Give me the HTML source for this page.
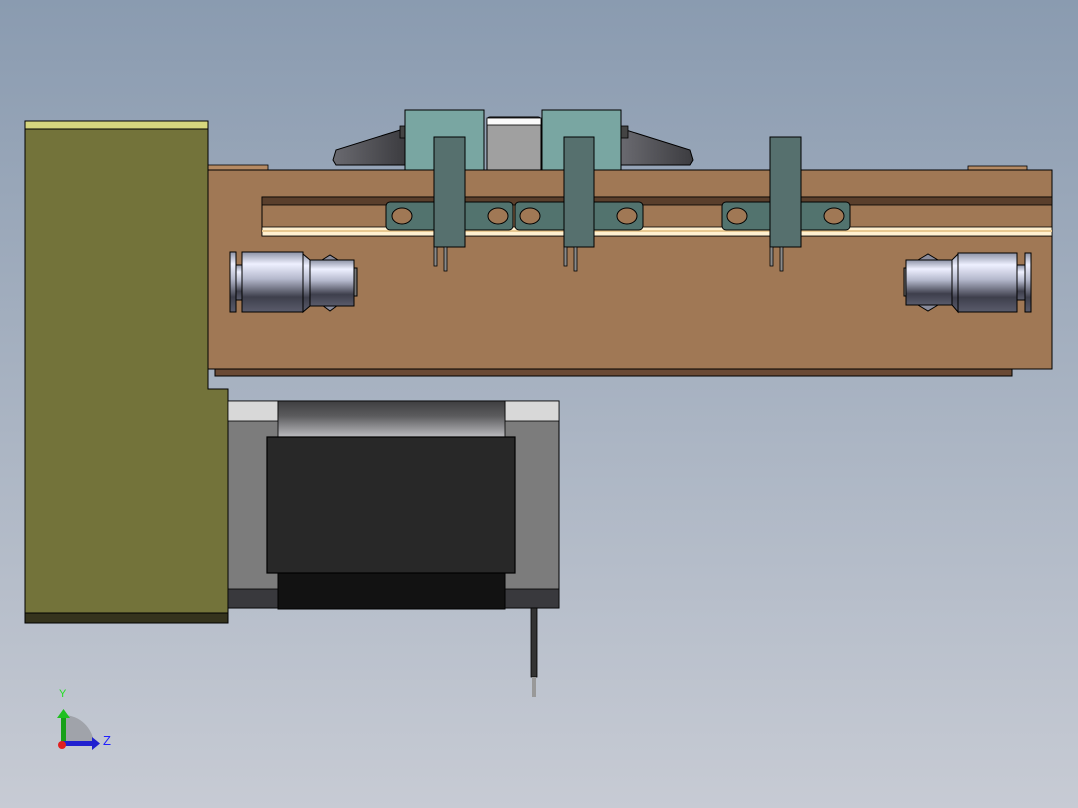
<!DOCTYPE html>
<html><head><meta charset="utf-8"><style>
html,body{margin:0;padding:0;width:1078px;height:808px;overflow:hidden}
svg{display:block}
</style></head><body>
<svg width="1078" height="808" viewBox="0 0 1078 808" xmlns="http://www.w3.org/2000/svg" font-family="Liberation Sans, sans-serif">
<defs>
<linearGradient id="bg" x1="0" y1="0" x2="0" y2="1">
<stop offset="0" stop-color="#8a9bb0"/><stop offset="1" stop-color="#c7cbd4"/></linearGradient>
<linearGradient id="cyl" x1="0" y1="0" x2="0" y2="1">
<stop offset="0" stop-color="#8d93a6"/><stop offset="0.2" stop-color="#eef0ff"/><stop offset="0.45" stop-color="#b4b8cc"/><stop offset="0.75" stop-color="#3e3f4c"/><stop offset="1" stop-color="#5a5c6c"/></linearGradient>
<linearGradient id="mt" x1="0" y1="0" x2="0" y2="1">
<stop offset="0" stop-color="#3e3e40"/><stop offset="0.4" stop-color="#5c5c5e"/><stop offset="1" stop-color="#c4c4c8"/></linearGradient>
<linearGradient id="lev" x1="0" y1="0" x2="1" y2="0">
<stop offset="0" stop-color="#6a6a70"/><stop offset="1" stop-color="#3c3c40"/></linearGradient>
</defs>
<rect width="1078" height="808" fill="url(#bg)"/>

<!-- top small strips -->
<rect x="208" y="165" width="60" height="5" fill="#b58a63" stroke="#000" stroke-width="0.8"/>
<rect x="968" y="166" width="59" height="4" fill="#b58a63" stroke="#000" stroke-width="0.8"/>

<!-- levers -->
<path d="M333 160 L336 150 L400 130 L405 132 L405 165 L336 165 Z" fill="url(#lev)" stroke="#000" stroke-width="1"/>
<path d="M693 160 L690 150 L626 130 L621 132 L621 165 L690 165 Z" fill="url(#lev)" stroke="#000" stroke-width="1" transform=""/>
<rect x="400" y="126" width="13" height="12" fill="#444" stroke="#000" stroke-width="0.8"/>
<rect x="615" y="126" width="13" height="12" fill="#444" stroke="#000" stroke-width="0.8"/>

<!-- top blocks -->
<rect x="405" y="110" width="79" height="62" fill="#79a6a2" stroke="#000" stroke-width="1"/>
<rect x="542" y="110" width="79" height="62" fill="#79a6a2" stroke="#000" stroke-width="1"/>
<rect x="487" y="117" width="54" height="56" rx="3" fill="#a0a0a0" stroke="#000" stroke-width="1"/>
<rect x="487" y="118" width="54" height="7" fill="#fafafa" stroke="#000" stroke-width="0.8"/>

<!-- plate -->
<rect x="215" y="368" width="797" height="8" fill="#6a4a35" stroke="#000" stroke-width="1"/>
<rect x="208" y="170" width="844" height="199" fill="#a07855" stroke="#000" stroke-width="1"/>

<!-- rail -->
<rect x="262" y="197" width="790" height="39" fill="#a07855" stroke="#000" stroke-width="1"/>
<rect x="262" y="197" width="790" height="8" fill="#5a3f2c" stroke="#000" stroke-width="0.8"/>
<rect x="262" y="227" width="790" height="9" fill="#fff0d0" stroke="#000" stroke-width="0.8"/>
<rect x="262" y="230" width="790" height="2" fill="#e8c890"/>

<!-- carriages -->
<g fill="#52736e" stroke="#000" stroke-width="1">
<rect x="386" y="202" width="127" height="28" rx="4"/>
<rect x="515" y="202" width="128" height="28" rx="4"/>
<rect x="722" y="202" width="128" height="28" rx="4"/>
</g>
<g fill="#a07855" stroke="#000" stroke-width="1">
<ellipse cx="402" cy="216" rx="10" ry="8"/><ellipse cx="498" cy="216" rx="10" ry="8"/>
<ellipse cx="530" cy="216" rx="10" ry="8"/><ellipse cx="627" cy="216" rx="10" ry="8"/>
<ellipse cx="737" cy="216" rx="10" ry="8"/><ellipse cx="834" cy="216" rx="10" ry="8"/>
</g>

<!-- vertical bars + pins -->
<g fill="#56706e" stroke="#000" stroke-width="1">
<rect x="434" y="137" width="31" height="110"/>
<rect x="564" y="137" width="30" height="110"/>
<rect x="770" y="137" width="31" height="110"/>
</g>
<g fill="#8a8a8a" stroke="#000" stroke-width="0.8">
<rect x="434" y="247" width="3" height="19"/><rect x="444" y="247" width="3" height="24"/>
<rect x="564" y="247" width="3" height="19"/><rect x="574" y="247" width="3" height="24"/>
<rect x="770" y="247" width="3" height="19"/><rect x="780" y="247" width="3" height="24"/>
</g>

<!-- left cylinder -->
<g stroke="#000" stroke-width="1">
<path d="M322 260 L330 255 L338 260 L338 305 L330 311 L322 305 Z" fill="#8a8c9c"/>
<rect x="230" y="252" width="6" height="60" fill="url(#cyl)"/>
<rect x="236" y="265" width="6" height="35" fill="url(#cyl)"/>
<rect x="242" y="252" width="61" height="60" fill="url(#cyl)"/>
<path d="M303 254 L310 260 L310 306 L303 312 Z" fill="url(#cyl)"/>
<rect x="310" y="260" width="44" height="46" fill="url(#cyl)"/>
<rect x="354" y="268" width="3" height="28" fill="#777"/>
</g>
<!-- right cylinder -->
<g stroke="#000" stroke-width="1">
<path d="M918 260 L928 254 L938 260 L938 305 L928 311 L918 305 Z" fill="#8a8c9c"/>
<rect x="904" y="268" width="3" height="28" fill="#777"/>
<rect x="906" y="260" width="46" height="45" fill="url(#cyl)"/>
<path d="M952 260 L958 254 L958 312 L952 305 Z" fill="url(#cyl)"/>
<rect x="958" y="253" width="59" height="59" fill="url(#cyl)"/>
<rect x="1017" y="265" width="8" height="35" fill="url(#cyl)"/>
<rect x="1025" y="253" width="6" height="59" fill="url(#cyl)"/>
</g>

<!-- olive block -->
<path d="M25 129 L208 129 L208 389 L228 389 L228 613 L25 613 Z" fill="#73733a" stroke="#000" stroke-width="1"/>
<rect x="25" y="121" width="183" height="8" fill="#d6d67e" stroke="#000" stroke-width="1"/>
<rect x="25" y="613" width="203" height="10" fill="#35331d" stroke="#000" stroke-width="1"/>

<!-- motor -->
<rect x="228" y="401" width="331" height="207" fill="#7c7c7c" stroke="#000" stroke-width="1"/>
<rect x="228" y="401" width="50" height="20" fill="#d8d8d8" stroke="#000" stroke-width="0.8"/>
<rect x="505" y="401" width="54" height="20" fill="#d8d8d8" stroke="#000" stroke-width="0.8"/>
<rect x="228" y="589" width="331" height="19" fill="#39393d" stroke="#000" stroke-width="0.8"/>
<rect x="278" y="401" width="227" height="38" fill="url(#mt)" stroke="#000" stroke-width="0.8"/>
<rect x="278" y="572" width="227" height="37" fill="#121212" stroke="#000" stroke-width="1"/>
<rect x="267" y="437" width="248" height="136" fill="#282828" stroke="#000" stroke-width="1.2"/>
<rect x="531" y="608" width="6" height="69" fill="#333" stroke="#000" stroke-width="0.8"/>
<rect x="532" y="677" width="4" height="20" fill="#999"/>

<!-- triad -->
<path d="M63 744 L63 715 A31 31 0 0 1 94 744 Z" fill="#a0a3aa"/>
<rect x="61" y="716" width="5" height="28" fill="#18a018"/>
<path d="M57 718 L63.5 709 L70 718 Z" fill="#20c020"/>
<rect x="63" y="741" width="30" height="5" fill="#2020d0"/>
<path d="M92 737 L100 743.5 L92 750 Z" fill="#2020d0"/>
<circle cx="62" cy="745" r="4" fill="#e02020"/>
<text x="59" y="697" font-size="11" fill="#20e020">Y</text>
<text x="103" y="745" font-size="13" fill="#2020ff">Z</text>
</svg>
</body></html>
